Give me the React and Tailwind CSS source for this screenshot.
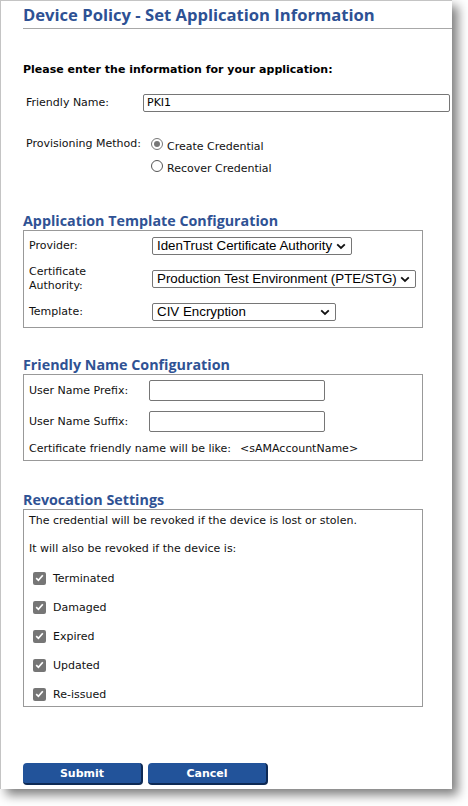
import React from "react";

const body = { fontFamily: '"DejaVu Sans", Verdana, sans-serif' };
const head = { fontFamily: '"Open Sans", "Noto Sans", sans-serif' };

function Chevron() {
  return (
    <svg width="10" height="7" viewBox="0 0 10 7" className="shrink-0">
      <path d="M1.2 1.3 L5 5 L8.8 1.3" fill="none" stroke="#111" strokeWidth="1.8" />
    </svg>
  );
}

function Select({ w, text }) {
  return (
    <div
      className={`flex h-[18px] items-center justify-between rounded-[2px] border border-[#767676] bg-white pl-[4px] pr-[5px] text-[13.33px] leading-none text-black ${w}`}
      style={{ fontFamily: '"Liberation Sans", Arial, sans-serif' }}
    >
      <span className="whitespace-nowrap">{text}</span>
      <Chevron />
    </div>
  );
}

function Check({ label }) {
  return (
    <div className="flex h-[16px] items-center">
      <span className="ml-[4px] flex h-[13px] w-[13px] items-center justify-center rounded-[2px] bg-[#767676]">
        <svg width="9" height="8" viewBox="0 0 9 8">
          <path d="M1.2 4.2 L3.4 6.3 L7.8 1.3" fill="none" stroke="#fff" strokeWidth="1.7" />
        </svg>
      </span>
      <span className="ml-[7px] mt-[1px]">{label}</span>
    </div>
  );
}

function Heading({ children, className = "" }) {
  return (
    <div className={`h-[18px] text-[14.3px] font-bold leading-[18px] text-[#2f5294] ${className}`} style={head}>
      {children}
    </div>
  );
}

export default function App() {
  return (
    <div className="h-[806px] w-[468px] bg-white">
      <div
        className="h-[789px] w-[452px] border-l border-t border-[#c4c4c4] bg-white text-[11px] leading-[14px] text-[#111] shadow-[6px_6px_10px_rgba(0,0,0,0.5)]"
        style={body}
      >
        <div className="ml-[22px] h-[28px] border-b border-[#a8a8a8]">
          <div className="pt-[4px] text-[16.6px] font-bold leading-[20px] text-[#2d5194]" style={head}>
            Device Policy - Set Application Information
          </div>
        </div>

        <div className="ml-[22px] mr-[2px]">
          <div className="mt-[34px] font-bold text-black">Please enter the information for your application:</div>

          <div className="mt-[17px] flex h-[18px] items-center">
            <span className="w-[120px] pl-[3px]">Friendly Name:</span>
            <div className="flex h-[18px] flex-1 items-center rounded-[2px] border border-[#767676] pl-[3px] text-black">
              PKI1
            </div>
          </div>

          <div className="mt-[21px] flex">
            <span className="flex h-[22px] w-[128px] items-center pl-[3px]">Provisioning Method:</span>
            <div className="flex flex-col">
              <div className="flex h-[22px] items-center">
                <span className="flex h-[12px] w-[12px] items-center justify-center rounded-full border border-[#777]">
                  <span className="h-[6px] w-[6px] rounded-full bg-[#777]" />
                </span>
                <span className="ml-[4px] mt-[5px]">Create Credential</span>
              </div>
              <div className="flex h-[22px] items-center">
                <span className="h-[12px] w-[12px] rounded-full border border-[#555]" />
                <span className="ml-[4px] mt-[5px]">Recover Credential</span>
              </div>
            </div>
          </div>

          <Heading className="mt-[35px]">Application Template Configuration</Heading>
          <div className="w-[400px] border border-[#999] px-[5px] pb-[6px] pt-[6px]">
            <div className="flex h-[18px] items-center">
              <span className="w-[123px]">Provider:</span>
              <Select w="w-[200px]" text="IdenTrust Certificate Authority" />
            </div>
            <div className="mt-[10px] flex h-[28px] items-center">
              <span className="w-[123px]">
                Certificate
                <br />
                Authority:
              </span>
              <Select w="w-[264px]" text="Production Test Environment (PTE/STG)" />
            </div>
            <div className="mt-[10px] flex h-[18px] items-center">
              <span className="w-[123px]">Template:</span>
              <Select w="w-[184px]" text="CIV Encryption" />
            </div>
          </div>

          <Heading className="mt-[28px]">Friendly Name Configuration</Heading>
          <div className="w-[400px] border border-[#999] px-[5px] pb-[4px] pt-[5px]">
            <div className="flex h-[21px] items-center">
              <span className="w-[120px]">User Name Prefix:</span>
              <div className="h-[21px] w-[176px] rounded-[2px] border border-[#767676]" />
            </div>
            <div className="mt-[10px] flex h-[21px] items-center">
              <span className="w-[120px]">User Name Suffix:</span>
              <div className="h-[21px] w-[176px] rounded-[2px] border border-[#767676]" />
            </div>
            <div className="mt-[10px] flex">
              <span>Certificate friendly name will be like:</span>
              <span className="ml-[9px]">&lt;sAMAccountName&gt;</span>
            </div>
          </div>

          <Heading className="mt-[30px]">Revocation Settings</Heading>
          <div className="w-[400px] border border-[#999] px-[5px] pb-[4px] pt-[4px]">
            <div>The credential will be revoked if the device is lost or stolen.</div>
            <div className="mt-[14px]">It will also be revoked if the device is:</div>
            <div className="mt-[14px] flex flex-col gap-[13px]">
              <Check label="Terminated" />
              <Check label="Damaged" />
              <Check label="Expired" />
              <Check label="Updated" />
              <Check label="Re-issued" />
            </div>
          </div>

          <div className="mt-[56px] flex gap-[5px]">
            {["Submit", "Cancel"].map((t) => (
              <button
                key={t}
                className="flex h-[22px] w-[120px] items-center justify-center rounded-[4px] border-b-2 border-r-2 border-[#0e2a55] bg-[#22539a] pt-[2px] text-[11px] font-bold text-white"
                style={body}
              >
                {t}
              </button>
            ))}
          </div>
        </div>
      </div>
    </div>
  );
}
